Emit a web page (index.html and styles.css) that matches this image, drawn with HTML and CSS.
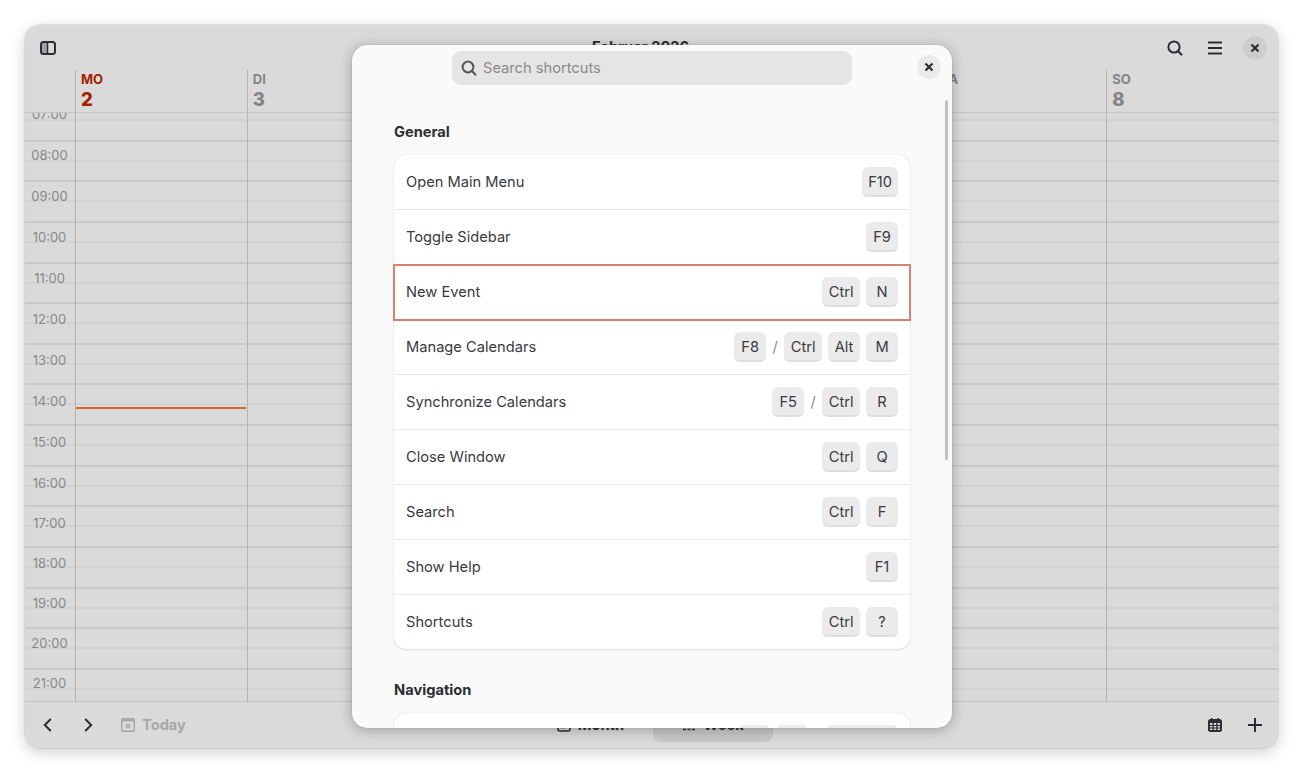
FILE: index.html
```html
<!DOCTYPE html>
<html lang="en">
<head>
<meta charset="utf-8">
<title>Calendar shortcuts</title>
<link rel="stylesheet" href="styles.css">
</head>
<body>
<div class="window">
  <header class="titlebar">
    <div class="tools">
      <button class="icon-btn"><svg width="16" height="16" viewBox="0 0 16 16"><path class="fill-soft" d="M1.5 2.5h6v11h-6z"/><rect class="outline" x="1" y="2" width="14" height="12" rx="2.5"/><path class="outline-thin" d="M7.500 2v12"/></svg></button>
    </div>
    <div class="title">Februar 2026</div>
    <div class="tools tools-end">
      <button class="icon-btn"><svg width="16" height="16" viewBox="0 0 16 16"><circle class="outline" cx="7" cy="7" r="5.6"/><path class="outline" d="M11 11l4 4.2"/></svg></button>
      <button class="icon-btn"><svg width="16" height="16" viewBox="0 0 16 16"><path class="outline" d="M1 2.500h14M1 8h14M1 13.500h14"/></svg></button>
      <button class="icon-btn close-btn"><svg width="12" height="12" viewBox="0 0 12 12"><path class="outline-bold" d="M2.500 2.500l7 7M9.500 2.500l-7 7"/></svg></button>
    </div>
  </header>

  <div class="days">
    <div class="day today"><span class="day-name">MO</span><span class="day-num">2</span></div>
    <div class="day"><span class="day-name">DI</span><span class="day-num">3</span></div>
    <div class="day"><span class="day-name">MI</span><span class="day-num">4</span></div>
    <div class="day"><span class="day-name">DO</span><span class="day-num">5</span></div>
    <div class="day"><span class="day-name">FR</span><span class="day-num">6</span></div>
    <div class="day"><span class="day-name">SA</span><span class="day-num">7</span></div>
    <div class="day"><span class="day-name">SO</span><span class="day-num">8</span></div>
  </div>

  <div class="timeline">
    <div class="hours">
      <div class="hour"></div><div class="hour"></div><div class="hour"></div>
      <div class="hour"></div><div class="hour"></div><div class="hour"></div>
      <div class="hour"></div><div class="hour"></div><div class="hour"></div>
      <div class="hour"></div><div class="hour"></div><div class="hour"></div>
      <div class="hour"></div><div class="hour"></div><div class="hour"></div>
    </div>
    <div class="labels">
      <div class="label">07:00</div>
      <div class="label">08:00</div>
      <div class="label">09:00</div>
      <div class="label">10:00</div>
      <div class="label">11:00</div>
      <div class="label">12:00</div>
      <div class="label">13:00</div>
      <div class="label">14:00</div>
      <div class="label">15:00</div>
      <div class="label">16:00</div>
      <div class="label">17:00</div>
      <div class="label">18:00</div>
      <div class="label">19:00</div>
      <div class="label">20:00</div>
      <div class="label">21:00</div>
    </div>
    <div class="columns">
      <div class="column"><div class="now"></div></div>
      <div class="column"></div>
      <div class="column"></div>
      <div class="column"></div>
      <div class="column"></div>
      <div class="column"></div>
      <div class="column"></div>
    </div>
  </div>

  <footer class="bottombar">
    <div class="tools">
      <button class="icon-btn"><svg width="16" height="16" viewBox="0 0 16 16"><path class="outline" d="M10.800 2l-6 6 6 6"/></svg></button>
      <button class="icon-btn"><svg width="16" height="16" viewBox="0 0 16 16"><path class="outline" d="M5.200 2l6 6-6 6"/></svg></button>
      <button class="today-btn"><svg width="14" height="14" viewBox="0 0 14 14"><path class="fill-muted" fill-rule="evenodd" d="M2 0h10a2 2 0 0 1 2 2v10a2 2 0 0 1-2 2H2a2 2 0 0 1-2-2V2a2 2 0 0 1 2-2zM1.500 3.500V12c0 .3.200.5.500.5h10c.3 0 .5-.2.500-.5V3.500zM5 6h4v4H5zM6.200 7.200v1.600h1.600V7.200z"/></svg><span>Today</span></button>
    </div>
    <div class="tabs">
      <div class="tab tab-month"><svg width="14" height="14" viewBox="0 0 14 14"><rect class="outline-thin" x="1" y="1" width="12" height="12" rx="2"/><path class="outline-thin" d="M4 7h1M6.500 7h1M9 7h1M4 10h1M6.500 10h1"/></svg><span>Month</span></div>
      <div class="tab tab-active"><svg width="14" height="14" viewBox="0 0 14 14"><path class="outline-thin" d="M1 2h12M1 7h12M1 11.500h3M5.500 11.500h3M10 11.500h3"/></svg><span>Week</span></div>
    </div>
    <div class="tools tools-end">
      <button class="icon-btn"><svg width="16" height="16" viewBox="0 0 16 16"><path class="fill-dark" fill-rule="evenodd" d="M4 1h1.500v1h5V1H12v1h.5A2.500 2.500 0 0 1 15 4.500v8a2.500 2.500 0 0 1-2.500 2.500h-9A2.500 2.500 0 0 1 1 12.500v-8A2.500 2.500 0 0 1 3.500 2H4zM3 6v2h2.400V6zm3.800 0v2h2.400V6zm3.800 0v2H13V6zM3 9v1.500h2.400V9zm3.800 0v1.500h2.400V9zm3.800 0v1.500H13V9zM3 11.500V13h2.400v-1.500zm3.800 0V13h2.400v-1.500zm3.800 0V13H13v-1.500z"/></svg></button>
      <button class="icon-btn"><svg width="16" height="16" viewBox="0 0 16 16"><path class="outline" d="M8 1v14M1 8h14"/></svg></button>
    </div>
  </footer>
</div>

<section class="dialog">
  <div class="dialog-head">
    <label class="search">
      <svg width="16" height="16" viewBox="0 0 16 16"><circle class="outline-gray" cx="7" cy="7" r="5.400"/><path class="outline-gray" d="M11 11l4 4.200"/></svg>
      <span>Search shortcuts</span>
    </label>
    <button class="dialog-close"><svg width="12" height="12" viewBox="0 0 12 12"><path class="outline-bold" d="M2.500 2.500l7 7M9.500 2.500l-7 7"/></svg></button>
  </div>
  <div class="dialog-body">
    <h2 class="group-title">General</h2>
    <div class="card">
      <div class="row"><span>Open Main Menu</span><div class="keys"><kbd class="tight">F10</kbd></div></div>
      <div class="row"><span>Toggle Sidebar</span><div class="keys"><kbd>F9</kbd></div></div>
      <div class="row row-focus"><span>New Event</span><div class="keys"><kbd>Ctrl</kbd><kbd>N</kbd></div></div>
      <div class="row"><span>Manage Calendars</span><div class="keys"><kbd>F8</kbd><i>/</i><kbd>Ctrl</kbd><kbd>Alt</kbd><kbd>M</kbd></div></div>
      <div class="row"><span>Synchronize Calendars</span><div class="keys"><kbd>F5</kbd><i>/</i><kbd>Ctrl</kbd><kbd>R</kbd></div></div>
      <div class="row"><span>Close Window</span><div class="keys"><kbd>Ctrl</kbd><kbd>Q</kbd></div></div>
      <div class="row"><span>Search</span><div class="keys"><kbd>Ctrl</kbd><kbd>F</kbd></div></div>
      <div class="row"><span>Show Help</span><div class="keys"><kbd>F1</kbd></div></div>
      <div class="row"><span>Shortcuts</span><div class="keys"><kbd>Ctrl</kbd><kbd>?</kbd></div></div>
    </div>
    <h2 class="group-title group-next">Navigation</h2>
    <div class="card">
      <div class="row"><span>Previous View</span><div class="keys"><kbd>Alt</kbd><kbd>←</kbd><i>/</i><kbd class="wide">Back</kbd></div></div>
    </div>
  </div>
  <div class="scrollbar"></div>
</section>
</body>
</html>
```

FILE: styles.css
```css
* { box-sizing: border-box; }

html, body {
  margin: 0;
  height: 773px;
  overflow: hidden;
  background: #fff;
  font-family: Inter, "Noto Sans", sans-serif;
  color: #2e2e32;
}

button {
  border: 0;
  background: none;
  padding: 0;
  font: inherit;
  color: inherit;
}

svg { display: block; }

.outline, .outline-bold, .outline-thin, .outline-gray {
  fill: none;
  stroke: #2e2e32;
  stroke-width: 2;
}
.outline-bold { stroke-width: 2.2; }
.outline-thin { stroke-width: 1.5; }
.outline-gray { stroke: #555558; }
.fill-soft { fill: #a4a4a4; }
.fill-muted { fill: #a8a8a8; }
.fill-dark { fill: #2e2e32; }

/* Window */
.window {
  margin: 25px 0 0 25px;
  width: 1253px;
  height: 723px;
  display: flex;
  flex-direction: column;
  background: #dadada;
  border-radius: 15px;
  box-shadow: 0 0 0 1px rgba(0, 0, 0, .07), 0 4px 16px rgba(0, 0, 0, .2);
  overflow: hidden;
}

.titlebar {
  flex: none;
  height: 45px;
  padding: 0 6px;
  display: grid;
  grid-template-columns: 1fr auto 1fr;
  align-items: center;
}

.tools {
  display: flex;
  align-items: center;
  gap: 6px;
}
.tools-end { justify-content: flex-end; }

.icon-btn {
  width: 34px;
  height: 34px;
  display: flex;
  align-items: center;
  justify-content: center;
}

.close-btn {
  width: 24px;
  height: 24px;
  margin: 0 5px;
  border-radius: 50%;
  background: #cdcdcd;
}

.title {
  margin: 0 22px 1px 0;
  font-size: 14.670px;
  font-weight: 700;
  color: #2e2e32;
}

/* Day header */
.days {
  flex: none;
  height: 43px;
  padding-left: 50px;
  display: grid;
  grid-template-columns: repeat(7, 1fr);
  border-bottom: 1px solid #c2c2c2;
}

.day {
  padding: 2px 0 0 5px;
  border-left: 1px solid #b4b4b4;
  display: flex;
  flex-direction: column;
  color: #858585;
}
.day-name {
  font-size: 13px;
  line-height: 15px;
  font-weight: 700;
}
.day-num {
  font-size: 18.500px;
  line-height: 24px;
  font-weight: 800;
}
.today { color: #a51d00; }

/* Timeline */
.timeline {
  flex: 1;
  min-height: 0;
  position: relative;
  overflow: hidden;
  border-bottom: 1px solid #c2c2c2;
}

.hours { margin-top: -12px; }

.hour {
  height: 40.65px;
  border-bottom: 2px solid #c9c9c9;
  background: linear-gradient(#d2d2d2, #d2d2d2) 0 18px / 100% 2px no-repeat;
}

.labels {
  position: absolute;
  top: -9px;
  left: 0;
  width: 49px;
  text-align: center;
  font-size: 13px;
  line-height: 20px;
  color: #888;
}
.label { height: 41px; }
.label:nth-child(n+10) { height: 40px; }

.columns {
  position: absolute;
  inset: 0 0 0 50px;
  display: grid;
  grid-template-columns: repeat(7, 1fr);
}
.column {
  position: relative;
  border-left: 1px solid #b4b4b4;
}
.now {
  position: absolute;
  top: 294px;
  left: 0;
  right: 1px;
  height: 2px;
  background: #d4682f;
}

/* Bottom bar */
.bottombar {
  flex: none;
  height: 46px;
  padding: 0 6px;
  display: grid;
  grid-template-columns: 1fr auto 1fr;
  align-items: center;
}

.today-btn {
  margin-left: 10px;
  display: flex;
  align-items: center;
  gap: 7px;
  font-size: 14.670px;
  font-weight: 700;
  color: #a8a8a8;
}

.tabs {
  margin-left: 3px;
  display: grid;
  grid-template-columns: 120px 120px;
}
.tab {
  height: 34px;
  display: flex;
  align-items: center;
  justify-content: center;
  gap: 7px;
  border-radius: 8px;
  font-size: 14.670px;
  font-weight: 700;
}
.tab-month { padding-right: 5px; }
.tab-active { background: #c8c8c8; }

/* Shortcuts dialog */
.dialog {
  position: absolute;
  left: 352px;
  top: 45px;
  width: 600px;
  height: 683px;
  background: #fafafa;
  border-radius: 15px;
  box-shadow: 0 2px 14px rgba(0, 0, 0, .28), 0 0 1px rgba(0, 0, 0, .3);
  overflow: hidden;
  display: flex;
  flex-direction: column;
}

.dialog-head {
  flex: none;
  height: 46px;
  padding-top: 6px;
  display: grid;
  grid-template-columns: 1fr 400px 1fr;
  align-items: start;
}

.search {
  grid-column: 2;
  height: 34px;
  padding: 0 9px;
  display: flex;
  align-items: center;
  gap: 6px;
  background: #e5e5e5;
  border-radius: 9px;
  font-size: 14.670px;
  color: #8a8a8a;
}

.dialog-close {
  grid-column: 3;
  justify-self: end;
  margin: 4px 11px 0 0;
  width: 24px;
  height: 24px;
  border-radius: 50%;
  background: #ebebeb;
  display: flex;
  align-items: center;
  justify-content: center;
}

.dialog-body {
  flex: 1;
  min-height: 0;
  overflow: hidden;
  padding: 32px 42px 0;
}

.group-title {
  margin: 0 0 14px;
  font-size: 14.670px;
  line-height: 18px;
  font-weight: 700;
  color: #2e2e32;
}
.group-next { margin-top: 32px; }

.card {
  background: #fff;
  border-radius: 12px;
  box-shadow: 0 0 1px rgba(0, 0, 0, .18), 0 1px 3px rgba(0, 0, 0, .1);
}

.row {
  position: relative;
  height: 55px;
  padding: 0 12px;
  display: flex;
  align-items: center;
  justify-content: space-between;
  border-bottom: 1px solid #ebebeb;
  font-size: 14.670px;
  color: #3a3a3d;
}
.row:last-child { border-bottom: 0; height: 54px; }

.row-focus {
  outline: 2px solid #d9826f;
  outline-offset: -1px;
  border-bottom-color: transparent;
}

.keys {
  display: flex;
  align-items: center;
  gap: 6px;
}
.keys i {
  width: 6px;
  display: flex;
  justify-content: center;
  font-style: normal;
  color: #8a8a8a;
}

kbd {
  min-width: 32px;
  height: 30px;
  padding: 2px 6.500px 0;
  display: flex;
  align-items: center;
  justify-content: center;
  background: #ebebeb;
  border-bottom: 2px solid #dedede;
  border-radius: 6px;
  font-family: inherit;
  font-size: 14.670px;
  color: #3a3a3d;
}
.tight { padding: 2px 6px 0; }
.wide { width: 72px; }

.scrollbar {
  position: absolute;
  left: 593px;
  top: 55px;
  width: 3px;
  height: 360px;
  background: #c2c2c2;
  border-radius: 2px;
}
```
